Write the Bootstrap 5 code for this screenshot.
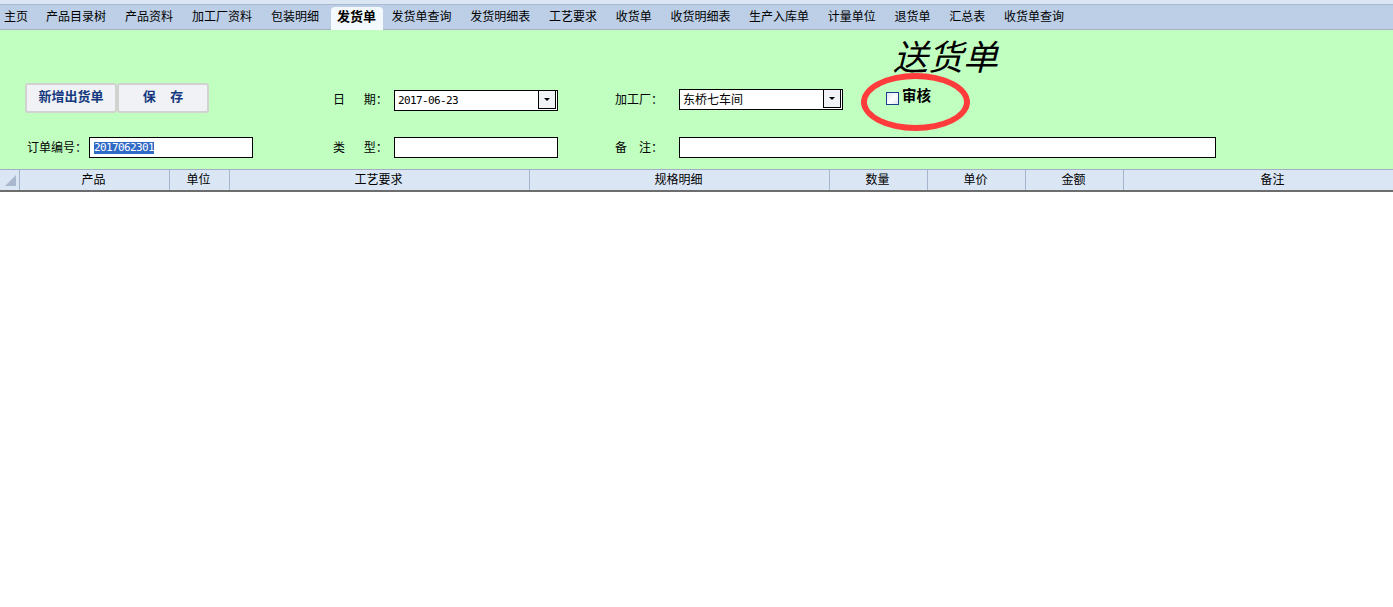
<!doctype html>
<html lang="zh">
<head>
<meta charset="utf-8">
<title>送货单</title>
<link href="https://cdn.jsdelivr.net/npm/bootstrap@5.3.0/dist/css/bootstrap.min.css" rel="stylesheet">
<style>
html,body{height:100%;}
body{background:#fff;color:#000;font:12px/16px "Liberation Sans","Noto Sans CJK SC",sans-serif;overflow:hidden;}
.top-strip{height:4px;background:#dbe6f4;border-bottom:1px solid #a9b8cf;box-sizing:content-box;}
.tabbar{height:25px;background:#bccfe7;border-bottom:1px solid #a5aec2;}
.tabbar .nav-link{padding:4px 9.5px 0;height:24px;color:#000;font-size:12px;line-height:16px;border-radius:0;}
.tabbar .nav-link:first-child{padding-left:4px;padding-right:8.5px;}
.tabbar .nav-link.active ~ .nav-link{padding-left:9.35px;padding-right:9.35px;}
.tabbar .nav-link.active{background:#f4f9fd;font-weight:700;font-size:13px;width:52px;text-align:center;margin:2px -.35px 0 2px;border-radius:4px 4px 0 0;height:23px;padding:2px 0 0;}
.formarea{height:139px;background:#c0ffc0;display:grid;grid-template-columns:25px 64px 164px 80px 61px 164px 56px 65px 164px 1fr;grid-template-rows:53px 30px 24px 21px;position:relative;}
.doc-title{grid-column:10;grid-row:1;align-self:start;font:italic 35px/36px "Noto Sans CJK SC",serif;padding:7px 0 0 50px;white-space:nowrap;}
.btnset{grid-column:2/4;grid-row:2;display:flex;}
.flatbtn{width:92px;height:30px;padding:0 0 3px;background:#f0f2f5;border:2px solid #d0d3d0;border-radius:3px;color:#15397f;font-weight:700;font-size:13px;line-height:16px;}
.flatbtn:hover{background:#f0f2f5;color:#15397f;border-color:#d0d3d0;}
.flbl{align-self:center;white-space:nowrap;}
.flbl-a{grid-column:5;grid-row:2;padding-top:3px;}
.flbl-b{grid-column:8;grid-row:2;padding:3px 0 0 1px;}
.flbl-c{grid-column:2;grid-row:4;padding-left:2px;}
.flbl-d{grid-column:5;grid-row:4;}
.flbl-e{grid-column:8;grid-row:4;padding-left:1px;}
.fbox{height:21px;background:#fff;border:1px solid #000;border-radius:0;padding:0 3px;font-size:12px;display:flex;align-items:center;justify-content:space-between;white-space:nowrap;overflow:hidden;}
.monoval{font:11px/12px "DejaVu Sans Mono",monospace;letter-spacing:-.62px;}
.fbox-date{grid-column:6;grid-row:2;align-self:end;margin-bottom:2px;padding-right:0;}
.fbox-fac{grid-column:9;grid-row:2;align-self:end;margin-bottom:3px;padding-right:0;}
.fbox-no{grid-column:3;grid-row:4;padding-left:4px;}
.fbox-type{grid-column:6;grid-row:4;}
.fbox-memo{grid-column:9/11;grid-row:4;width:537px;}
.selected-text{background:#316ac5;color:#fff;}
.dropcell{width:18px;height:18px;border:1px solid #000;border-top:0;background:#f0f2f5;display:flex;align-items:center;justify-content:center;margin-right:1px;flex:none;align-self:flex-start;}
.dropcell::after{content:"";border-left:3px solid transparent;border-right:3px solid transparent;border-top:3px solid #000;}
.approve{grid-column:10;grid-row:2;display:flex;align-items:flex-start;padding:5px 0 0 43px;font-weight:700;font-size:14.5px;line-height:16px;}
.chk{width:13px;height:13px;border:1px solid #1a3f8f;background:linear-gradient(135deg,#e2e7f3,#fdfdfe 55%,#dfe5f3);margin:4px 3px 0 0;flex:none;}
.redring{position:absolute;left:861px;top:43px;width:109px;height:58px;border:6px solid #ff3b3b;border-radius:50%;}
.gridhead{height:23px;display:flex;background:#dae6f4;border-top:1px solid #a5aec2;border-bottom:2px solid #6d6d6d;overflow:hidden;}
.hc{flex:none;text-align:center;line-height:20px;height:20px;border-right:1px solid #a5b5cd;padding-right:2px;}
.hc-last{padding-right:0;}
.hc-corner{width:20px;position:relative;padding:0;}
.hc-corner svg{position:absolute;left:5px;top:5px;}
</style>
</head>
<body>
<div class="top-strip"></div>
<nav class="nav tabbar flex-nowrap">
<a class="nav-link" href="#">主页</a><a class="nav-link" href="#">产品目录树</a><a class="nav-link" href="#">产品资料</a><a class="nav-link" href="#">加工厂资料</a><a class="nav-link" href="#">包装明细</a><a class="nav-link active" href="#">发货单</a><a class="nav-link" href="#">发货单查询</a><a class="nav-link" href="#">发货明细表</a><a class="nav-link" href="#">工艺要求</a><a class="nav-link" href="#">收货单</a><a class="nav-link" href="#">收货明细表</a><a class="nav-link" href="#">生产入库单</a><a class="nav-link" href="#">计量单位</a><a class="nav-link" href="#">退货单</a><a class="nav-link" href="#">汇总表</a><a class="nav-link" href="#">收货单查询</a>
</nav>
<section class="formarea">
<div class="doc-title">送货单</div>
<div class="btnset"><button type="button" class="btn flatbtn">新增出货单</button><button type="button" class="btn flatbtn">保&nbsp;&nbsp;&nbsp;&nbsp;存</button></div>
<div class="flbl flbl-a">日　&nbsp;&nbsp;期：</div>
<div class="fbox fbox-date"><span class="monoval">2017-06-23</span><i class="dropcell"></i></div>
<div class="flbl flbl-b">加工厂：</div>
<div class="fbox fbox-fac"><span>东桥七车间</span><i class="dropcell"></i></div>
<div class="approve"><span class="chk"></span><span>审核</span></div>
<div class="flbl flbl-c">订单编号：</div>
<div class="fbox fbox-no"><span class="monoval selected-text">2017062301</span></div>
<div class="flbl flbl-d">类　&nbsp;&nbsp;型：</div>
<div class="fbox fbox-type"></div>
<div class="flbl flbl-e">备　注：</div>
<div class="fbox fbox-memo"></div>
<div class="redring"></div>
</section>
<div class="gridhead">
<div class="hc hc-corner"><svg width="11" height="11" viewBox="0 0 11 11"><path d="M0 11 11 0v11z" fill="#a9b8cf"/></svg></div>
<div class="hc" style="width:150px">产品</div>
<div class="hc" style="width:60px">单位</div>
<div class="hc" style="width:300px">工艺要求</div>
<div class="hc" style="width:300px">规格明细</div>
<div class="hc" style="width:98px">数量</div>
<div class="hc" style="width:98px">单价</div>
<div class="hc" style="width:98px">金额</div>
<div class="hc hc-last" style="width:298px">备注</div>
</div>
<script src="https://cdn.jsdelivr.net/npm/bootstrap@5.3.0/dist/js/bootstrap.bundle.min.js"></script>
</body>
</html>
